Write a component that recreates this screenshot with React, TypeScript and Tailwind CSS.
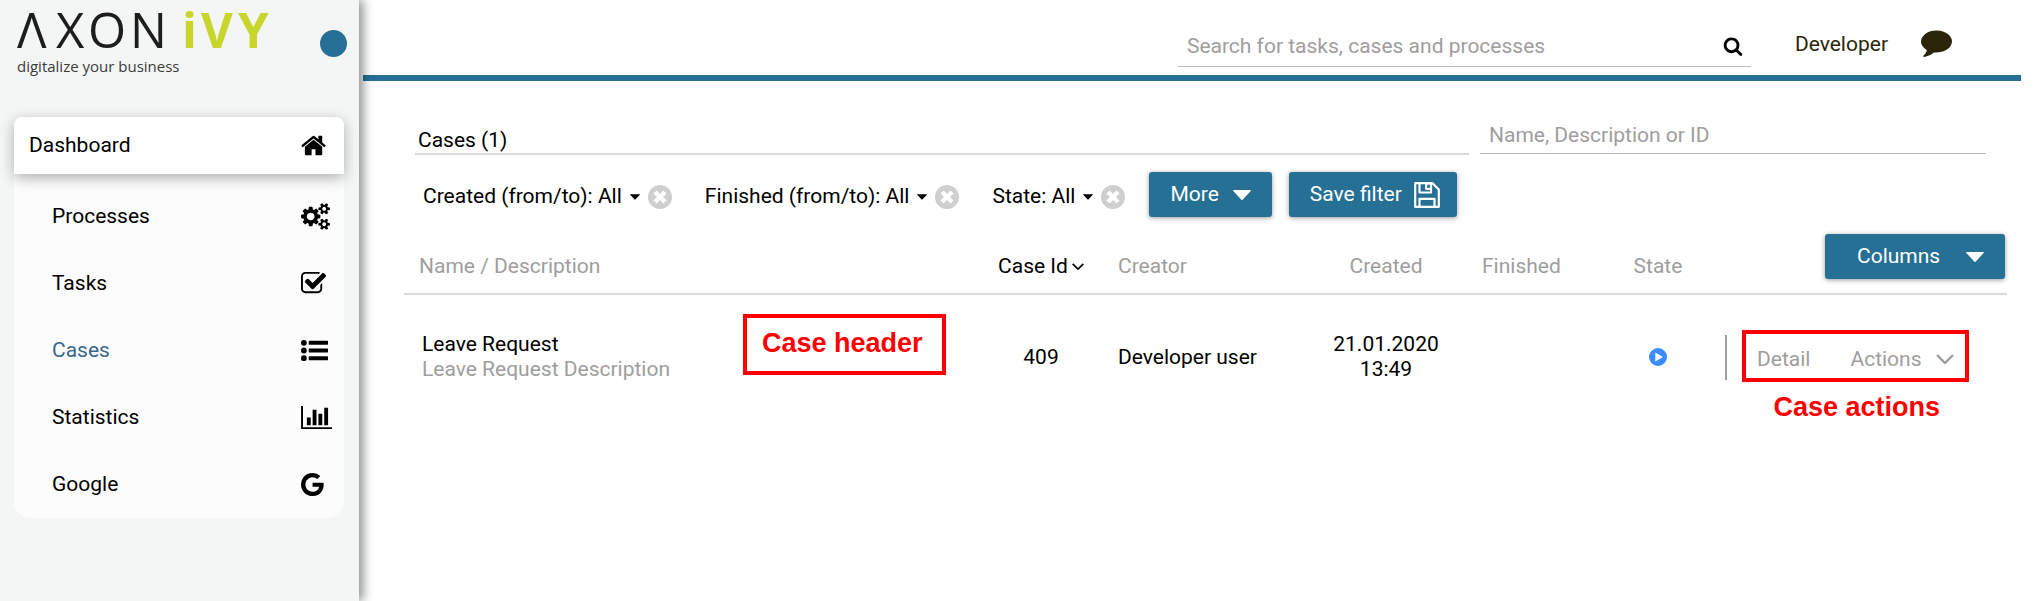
import React from "react";

type IconProps = { className?: string };

const glyph = (viewBox: string, d: string) =>
  function Glyph({ className }: IconProps) {
    return (
      <svg viewBox={viewBox} className={className} fill="currentColor" aria-hidden="true">
        <path d={d} />
      </svg>
    );
  };

const HomeIcon = glyph(
  "64 0 1792 1792",
  "M1472 992v480q0 26-19 45t-45 19h-384v-384h-256v384h-384q-26 0-45-19t-19-45v-480q0-1 .5-3t.5-3l575-474 575 474q1 2 1 6zm223-69l-62 74q-8 9-21 11h-3q-13 0-21-7l-692-577-692 577q-12 8-24 7-13-2-21-11l-62-74q-8-10-7-23.5t11-21.5l719-599q32-26 76-26t76 26l244 204v-195q0-14 9-23t23-9h192q14 0 23 9t9 23v408l219 182q10 8 11 21.5t-7 23.5z"
);
const CogsIcon = glyph(
  "0 0 1920 1792",
  "M896 896q0-106-75-181t-181-75-181 75-75 181 75 181 181 75 181-75 75-181zm768 512q0-52-38-90t-90-38-90 38-38 90q0 53 37.5 90.5t90.5 37.5 90.5-37.5 37.5-90.5zm0-1024q0-52-38-90t-90-38-90 38-38 90q0 53 37.5 90.5t90.5 37.5 90.5-37.5 37.5-90.5zm-384 421v185q0 10-7 19.5t-16 10.5l-155 24q-11 35-32 76 34 48 90 115 7 11 7 20 0 12-7 19-23 30-82.5 89.5t-78.5 59.5q-11 0-21-7l-115-90q-37 19-77 31-11 108-23 155-7 24-30 24h-186q-11 0-20-7.5t-10-17.5l-23-153q-34-10-75-31l-118 89q-7 7-20 7-11 0-21-8-144-133-144-160 0-9 7-19 10-14 41-53t47-61q-23-44-35-82l-152-24q-10-1-17-9.5t-7-19.5v-185q0-10 7-19.5t16-10.5l155-24q11-35 32-76-34-48-90-115-7-11-7-20 0-12 7-20 22-30 82-89t79-59q11 0 21 7l115 90q34-18 77-32 11-108 23-154 7-24 30-24h186q11 0 20 7.5t10 17.5l23 153q34 10 75 31l118-89q8-7 20-7 11 0 21 8 144 133 144 160 0 9-7 19-12 16-42 54t-45 60q23 48 34 82l152 23q10 2 17 10.5t7 19.5zm640 533v140q0 16-149 31-12 27-30 52 51 113 51 138 0 4-4 7-122 71-124 71-8 0-46-47t-52-68q-20 2-30 2t-30-2q-14 21-52 68t-46 47q-2 0-124-71-4-3-4-7 0-25 51-138-18-25-30-52-149-15-149-31v-140q0-16 149-31 13-29 30-52-51-113-51-138 0-4 4-7 4-2 35-20t59-34 30-16q8 0 46 46.5t52 67.5q20-2 30-2t30 2q51-71 92-112l6-2q4 0 124 70 4 3 4 7 0 25-51 138 17 23 30 52 149 15 149 31zm0-1024v140q0 16-149 31-12 27-30 52 51 113 51 138 0 4-4 7-122 71-124 71-8 0-46-47t-52-68q-20 2-30 2t-30-2q-14 21-52 68t-46 47q-2 0-124-71-4-3-4-7 0-25 51-138-18-25-30-52-149-15-149-31v-140q0-16 149-31 13-29 30-52-51-113-51-138 0-4 4-7 4-2 35-20t59-34 30-16q8 0 46 46.5t52 67.5q20-2 30-2t30 2q51-71 92-112l6-2q4 0 124 70 4 3 4 7 0 25-51 138 17 23 30 52 149 15 149 31z"
);
const CheckIcon = glyph(
  "64 0 1792 1792",
  "M1472 930v318q0 119-84.5 203.5t-203.5 84.5h-832q-119 0-203.5-84.5t-84.5-203.5v-832q0-119 84.5-203.5t203.5-84.5h832q63 0 117 25 15 7 18 23 3 17-9 29l-49 49q-10 10-23 10-3 0-9-2-23-6-45-6h-832q-66 0-113 47t-47 113v832q0 66 47 113t113 47h832q66 0 113-47t47-113v-254q0-13 9-22l64-64q10-10 23-10 6 0 12 3 20 8 20 29zm231-489l-814 814q-24 24-57 24t-57-24l-430-430q-24-24-24-57t24-57l110-110q24-24 57-24t57 24l263 263 647-647q24-24 57-24t57 24l110 110q24 24 24 57t-24 57z"
);
const ListIcon = glyph(
  "0 0 1792 1792",
  "M384 1408a192 192 0 1 1-384 0a192 192 0 1 1 384 0zM384 896a192 192 0 1 1-384 0a192 192 0 1 1 384 0zM1760 1280q32 0 32 32v192q0 32-32 32h-1216q-32 0-32-32v-192q0-32 32-32zM384 384a192 192 0 1 1-384 0a192 192 0 1 1 384 0zM1760 768q32 0 32 32v192q0 32-32 32h-1216q-32 0-32-32v-192q0-32 32-32zM1760 256q32 0 32 32v192q0 32-32 32h-1216q-32 0-32-32v-192q0-32 32-32z"
);
const ChartIcon = glyph(
  "0 0 2048 1792",
  "M640 896v512h-256v-512h256zm384-512v1024h-256v-1024h256zm1024 1152v128h-2048v-1536h128v1408h1920zm-640-896v768h-256v-768h256zm384-384v1152h-256v-1152h256z"
);
const GoogleIcon = glyph(
  "128 0 1792 1792",
  "M896 786h725q12 67 12 128 0 217-91 387.5t-259.5 266.5-386.5 96q-157 0-299-60.5t-245-163.5-163.5-245-60.5-299 60.5-299 163.5-245 245-163.5 299-60.5q300 0 515 201l-209 201q-123-119-306-119-129 0-238.5 65t-173.5 176.5-64 243.5 64 243.5 173.5 176.5 238.5 65q87 0 160-24t120-60 82-82 51.5-87 22.5-78h-436v-264z"
);
const SearchIcon = glyph(
  "0 0 1792 1792",
  "M1216 832q0-185-131.5-316.5t-316.5-131.5-316.5 131.5-131.5 316.5 131.5 316.5 316.5 131.5 316.5-131.5 131.5-316.5zm512 832q0 52-38 90t-90 38q-54 0-90-38l-343-342q-179 124-399 124-143 0-273.5-55.5t-225-150-150-225-55.5-273.5 55.5-273.5 150-225 225-150 273.5-55.5 273.5 55.5 225 150 150 225 55.5 273.5q0 220-124 399l343 343q37 37 37 90z"
);
const CommentIcon = glyph(
  "0 0 1792 1792",
  "M1792 896q0 174-120 321.5t-326 233-450 85.5q-70 0-145-8-198 175-460 242-49 14-114 22-17 2-30.5-9t-17.5-29v-1q-3-4-.5-12t2-10 4.5-9.5l6-9 7-8.5 8-9q7-8 31-34.5t34.5-38 31-39.5 32.5-51 27-59 26-76q-157-89-247.5-220t-90.5-281q0-130 71-248.5t191-204.5 286-136.5 348-50.5q244 0 450 85.5t326 233 120 321.5z"
);
const CaretIcon = glyph("0 0 18 10", "M0.5 0h17q0.6 0.3 0.2 0.9L9.6 9.7q-0.6 0.5-1.2 0L0.3 0.9Q-0.1 0.3 0.5 0z");
const PlayIcon = glyph("0 0 18 18", "M9 0a9 9 0 1 0 0 18a9 9 0 1 0 0-18zM6.3 4.6L14 9L6.3 13.4z");

function ClearIcon({ className }: IconProps) {
  return (
    <svg viewBox="0 0 24 24" className={className} aria-hidden="true">
      <circle cx="12" cy="12" r="12" fill="#cfcfcf" />
      <path d="M7 7l10 10M17 7l-10 10" stroke="#fff" strokeWidth="4.4" />
    </svg>
  );
}

function ChevronIcon({ className }: IconProps) {
  return (
    <svg viewBox="0 0 18 10" className={className} fill="none" stroke="currentColor" strokeWidth="2.4" aria-hidden="true">
      <path d="M1 1l8 8l8-8" />
    </svg>
  );
}

function SaveIcon({ className }: IconProps) {
  return (
    <svg viewBox="0 0 26 26" className={className} fill="none" stroke="currentColor" strokeWidth="2.2" strokeLinejoin="round" aria-hidden="true">
      <path d="M1.2 1.2h17.3l6.3 6.3v17.3h-23.6zM5.5 24.5v-7.7h15v7.7" />
      <path d="M5.5 1.5v9h11.5v-9M12.2 1.5h4.8v5.5h-4.8z" />
    </svg>
  );
}

function Logo() {
  return (
    <svg viewBox="0 0 256 78" className="h-[78px] w-[256px] overflow-visible" role="img" aria-label="AXON iVY, digitalize your business">
      <g fontFamily="'Open Sans', 'Noto Sans', sans-serif" fontSize="49">
        <text y="48" fill="#1d1d1b"><tspan x="0">Λ</tspan><tspan x="39">X</tspan><tspan x="71">O</tspan><tspan x="113">N</tspan></text>
        <text y="48" fill="#c8d52b" fontWeight="700"><tspan x="165">i</tspan><tspan x="184">V</tspan><tspan x="221">Y</tspan></text>
      </g>
      <text x="0" y="72" fill="#3c3c3b" fontSize="15" fontFamily="'Open Sans', 'Noto Sans', sans-serif">digitalize your business</text>
    </svg>
  );
}

const menu = [
  { label: "Processes", Icon: CogsIcon, size: "h-[27px] w-[29px]" },
  { label: "Tasks", Icon: CheckIcon, size: "size-[27px]" },
  { label: "Cases", Icon: ListIcon, size: "size-[27px]", active: true },
  { label: "Statistics", Icon: ChartIcon, size: "h-[27px] w-[31px]" },
  { label: "Google", Icon: GoogleIcon, size: "size-[27px]" },
];

function Sidebar() {
  return (
    <aside className="z-10 w-[359px] shrink-0 bg-[#f4f6f5] shadow-[4px_0_10px_rgba(0,0,0,0.45)]">
      <div className="flex h-[117px] items-start justify-between pl-[17px] pr-3">
        <Logo />
        <button aria-label="Toggle menu" className="mt-[30px] size-[27px] rounded-full bg-[#267095]" />
      </div>
      <nav className="ml-[14px] mr-[15px] rounded-t-lg rounded-b-2xl bg-[#fcfcfc]">
        <a href="#dashboard" className="flex h-[57px] items-center rounded-t-lg bg-white pl-[15px] shadow-[0_4px_14px_rgba(0,0,0,0.3)]">
          <span className="flex-1">Dashboard</span>
          <span className="w-[43px]"><HomeIcon className="size-[27px]" /></span>
        </a>
        <ul className="pt-[9px]">
          {menu.map(({ label, Icon, size, active }) => (
            <li key={label}>
              <a href={"#" + label.toLowerCase()} className="flex h-[67px] items-center pl-[38px]">
                <span className={active ? "flex-1 text-[#38688c]" : "flex-1"}>{label}</span>
                <span className="w-[43px]"><Icon className={size} /></span>
              </a>
            </li>
          ))}
        </ul>
      </nav>
    </aside>
  );
}

function Header() {
  return (
    <header className="flex h-[81px] items-start justify-end border-b-6 border-[#267095] pr-[69px]">
      <label className="mt-6 flex h-[43px] w-[573px] items-center border-b border-[#bdbdbd] pl-[9px] pr-2 pt-[2px]">
        <input aria-label="Search" placeholder="Search for tasks, cases and processes" className="min-w-0 flex-1 outline-none placeholder:text-[#9e9e9e]" />
        <SearchIcon className="size-5" />
      </label>
      <button className="ml-11 mt-8 leading-[25px] text-[#2b2609]">Developer</button>
      <button aria-label="Messages" className="ml-[33px] mt-[26px] text-[#2b2609]"><CommentIcon className="size-[31px]" /></button>
    </header>
  );
}

function Filter({ label }: { label: string }) {
  return (
    <div className="flex items-center">
      <button className="flex items-center gap-2">
        {label}
        <CaretIcon className="h-[6px] w-[10px]" />
      </button>
      <button aria-label={"Clear " + label} className="ml-2"><ClearIcon className="size-6" /></button>
    </div>
  );
}

const blueButton = "flex h-[45px] items-center rounded-[3px] bg-[#267095] text-white shadow-[0_1px_5px_rgba(0,0,0,0.4)]";

export default function App() {
  return (
    <div className="flex min-h-screen bg-white font-['Roboto',sans-serif] text-[21px] leading-[25px] text-black">
      <Sidebar />
      <div className="min-w-0 flex-1 pl-1 pr-[14px]">
        <Header />
        <main className="pl-[41px] pr-[14px]">
          <div className="flex gap-[11px] pl-[11px] pr-[21px] pt-9">
            <h1 className="flex h-[38px] flex-1 items-end border-b-2 border-[#d8dada] pl-[3px]">Cases (1)</h1>
            <input aria-label="Filter cases" placeholder="Name, Description or ID" className="h-[37px] w-[506px] border-b border-[#b5b9b9] pl-[9px] outline-none placeholder:text-[#9e9e9e]" />
          </div>
          <div className="flex items-center pl-[19px] pt-[17px]">
            <div className="flex gap-[33px] pr-6 pt-1">
              <Filter label="Created (from/to): All" />
              <Filter label="Finished (from/to): All" />
              <Filter label="State: All" />
            </div>
            <button className={blueButton + " gap-[14px] pl-[21px] pr-[21px]"}>
              More
              <CaretIcon className="h-[10px] w-[18px]" />
            </button>
            <button className={blueButton + " ml-[17px] gap-3 pl-[21px] pr-[17px]"}>
              Save filter
              <SaveIcon className="size-[26px]" />
            </button>
          </div>
          <table className="mt-[17px] w-full table-fixed">
            <colgroup>
              <col />
              <col className="w-[126px]" />
              <col className="w-[204px]" />
              <col className="w-[156px]" />
              <col className="w-[156px]" />
              <col className="w-[76px]" />
              <col className="w-[311px]" />
            </colgroup>
            <thead>
              <tr className="border-b-2 border-[#d8dada] text-left align-bottom text-[#9e9e9e] [&>th]:pb-[14px] [&>th]:font-normal">
                <th className="pl-[15px]">Name / Description</th>
                <th className="text-black">
                  <button className="flex w-full items-center justify-center gap-1">
                    Case Id
                    <ChevronIcon className="h-[7px] w-3" />
                  </button>
                </th>
                <th className="pl-[14px]">Creator</th>
                <th className="text-center">Created</th>
                <th className="pl-[18px]">Finished</th>
                <th className="text-center">State</th>
                <th>
                  <button className={blueButton + " ml-auto mr-[2px] w-[180px] justify-between pl-8 pr-[21px]"}>
                    Columns
                    <CaretIcon className="h-[10px] w-[18px]" />
                  </button>
                </th>
              </tr>
            </thead>
            <tbody>
              <tr className="h-[125px]">
                <td className="relative pl-[18px]">
                  <div>Leave Request</div>
                  <div className="text-[#9e9e9e]">Leave Request Description</div>
                  <div className="absolute right-8 top-[19px] flex h-[61px] w-[203px] items-center border-4 border-[#ff0000] pb-[3px] pl-[15px] font-['Liberation_Sans',sans-serif] text-[27px] font-bold text-[#ff0000]">
                    Case header
                  </div>
                </td>
                <td className="text-center">409</td>
                <td className="pl-[14px]">Developer user</td>
                <td className="text-center">21.01.2020<br />13:49</td>
                <td />
                <td><PlayIcon className="mx-auto size-[18px] text-[#3b8cff]" /></td>
                <td className="relative pl-[29px] text-[#9e9e9e]">
                  <div className="flex h-[45px] items-center border-l-2 border-[#9e9e9e] pl-[30px] pt-1">
                    <button>Detail</button>
                    <button className="ml-10 flex items-center gap-[14px]">
                      Actions
                      <ChevronIcon className="h-[10px] w-[18px]" />
                    </button>
                  </div>
                  <div className="pointer-events-none absolute right-[38px] top-[35px] h-[52px] w-[227px] border-4 border-[#ff0000]" />
                  <div className="absolute right-[67px] top-[100px] font-['Liberation_Sans',sans-serif] text-[27px] font-bold text-[#ff0000]">
                    Case actions
                  </div>
                </td>
              </tr>
            </tbody>
          </table>
        </main>
      </div>
    </div>
  );
}
